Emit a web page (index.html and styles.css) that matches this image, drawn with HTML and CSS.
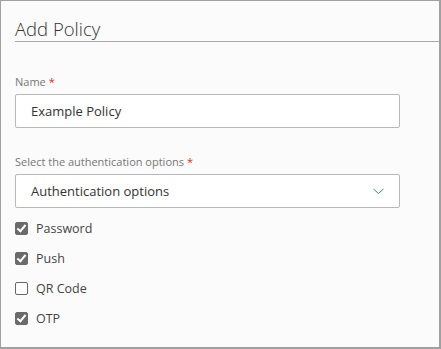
FILE: index.html
```html
<!DOCTYPE html>
<html lang="en">
<head>
    <meta charset="UTF-8">
    <title>Add Policy</title>
    <link rel="stylesheet" href="styles.css">
</head>
<body>
    <div class="panel">
        <h1 class="title">Add Policy</h1>
        <div class="field">
            <label class="label">Name <span class="req">*</span></label>
            <div class="input">Example Policy</div>
        </div>
        <div class="field">
            <label class="label">Select the authentication options <span class="req">*</span></label>
            <div class="input select">
                <span>Authentication options</span>
                <svg width="11" height="7" viewBox="0 0 11 7"><path d="M0.5 1 L5.5 5.5 L10.5 1" fill="none" stroke="#3b8496" stroke-width="1"/></svg>
            </div>
        </div>
        <ul class="checks">
            <li><span class="box on"></span>Password</li>
            <li><span class="box on"></span>Push</li>
            <li><span class="box"></span>QR Code</li>
            <li><span class="box on"></span>OTP</li>
        </ul>
    </div>
</body>
</html>
```

FILE: styles.css
```css
body {
    margin: 0;
    font-family: "Open Sans", Arial, sans-serif;
    background-color: #fff;
}
.panel {
    width: 424px;
    height: 346px;
    border: 1px solid #a0a0a0;
    border-right-width: 2px;
    border-bottom-width: 2px;
    background-color: #fbfbfb;
    padding-left: 14px;
}
.title {
    margin: 0;
    padding-top: 15px;
    height: 25px;
    font-size: 18.5px;
    font-weight: 300;
    color: #333;
    line-height: 25px;
    border-bottom: 1px solid #a9a9a9;
}
.field {
    margin-top: 33px;
    width: 385px;
}
.field + .field {
    margin-top: 27px;
}
.label {
    display: block;
    font-size: 11px;
    color: #777;
    line-height: 14px;
    margin-bottom: 5px;
}
.req {
    color: #d9302a;
}
.input {
    height: 32px;
    border: 1px solid #b8b8b8;
    border-radius: 2px;
    background-color: #fff;
    font-size: 13px;
    color: #333;
    line-height: 32px;
    padding-left: 15px;
}
.select {
    display: flex;
    justify-content: space-between;
    align-items: center;
    padding-right: 15px;
}
.checks {
    list-style: none;
    margin: 5px 0 0;
    padding: 0;
}
.checks li {
    display: flex;
    align-items: center;
    height: 30px;
    font-size: 12.5px;
    color: #444;
}
.box {
    width: 11px;
    height: 11px;
    border: 1px solid #666;
    border-radius: 2px;
    background-color: #fff;
    margin-right: 8px;
    position: relative;
}
.box.on {
    background-color: #6b6b6b;
    border-color: #6b6b6b;
}
.box.on::after {
    content: "";
    position: absolute;
    left: 3px;
    top: 0px;
    width: 3px;
    height: 7px;
    border: solid #fff;
    border-width: 0 2px 2px 0;
    transform: rotate(40deg);
}
```
